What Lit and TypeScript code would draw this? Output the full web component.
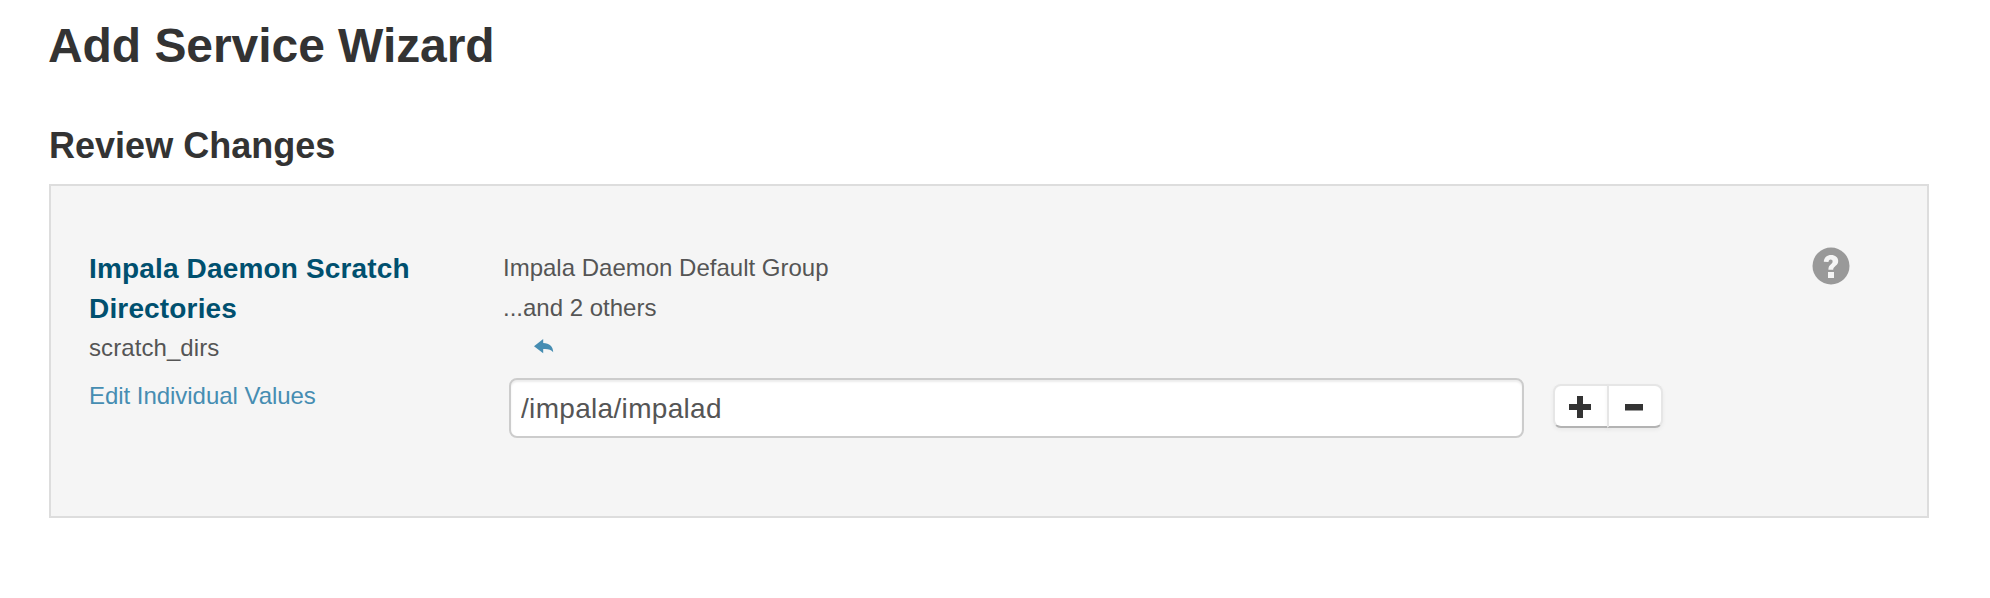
import { LitElement, html, css } from "lit";
import { customElement, property } from "lit/decorators.js";

@customElement("config-property")
class ConfigProperty extends LitElement {
  @property() label = "";
  @property() name = "";
  @property() group = "";
  @property() others = "";
  @property() value = "";

  static styles = css`
    :host {
      display: grid;
      grid-template-columns: 414px 1fr 38px;
      color: #555;
      font-size: 24px;
      line-height: 40px;
    }
    .title {
      margin: 0 0 -1px;
      padding-top: 1px;
      width: 340px;
      font-size: 28px;
      line-height: 40px;
      letter-spacing: 0.16px;
      color: #00506f;
    }
    .name {
      letter-spacing: 0.08px;
    }
    .edit {
      display: block;
      margin-top: 8px;
      color: #468db2;
      text-decoration: none;
      letter-spacing: -0.04px;
    }
    .undo {
      display: block;
      width: 20px;
      height: 16px;
      margin: 11px 0 23px 31px;
      fill: #468db2;
    }
    .row {
      display: flex;
      align-items: flex-start;
      padding-left: 6px;
    }
    .field {
      box-sizing: border-box;
      width: 1015px;
      height: 60px;
      margin: 0;
      padding: 2px 10px 0;
      border: 2px solid #ccc;
      border-radius: 8px;
      background: #fff;
      box-shadow: inset 0 2px 2px rgba(0, 0, 0, 0.075);
      font: 28px "Liberation Sans", Arial, sans-serif;
      letter-spacing: 0.32px;
      color: #555;
      outline: none;
    }
    .buttons {
      display: flex;
      margin: 6px 0 0 29px;
    }
    .button {
      box-sizing: border-box;
      display: flex;
      align-items: center;
      justify-content: center;
      width: 56px;
      height: 44px;
      padding: 1px 2px 0 0;
      border: 2px solid #e6e6e6;
      border-bottom-color: #b3b3b3;
      border-radius: 8px 0 0 8px;
      background: #fff;
      box-shadow: 0 2px 4px rgba(0, 0, 0, 0.05);
    }
    .button + .button {
      margin-left: -2px;
      border-radius: 0 8px 8px 0;
    }
    .glyph {
      display: block;
      width: 24px;
      height: 24px;
      fill: #333;
    }
    .help {
      display: block;
      width: 38px;
      height: 38px;
      margin-top: -1px;
    }
  `;

  render() {
    return html`
      <div>
        <h3 class="title">${this.label}</h3>
        <div class="name">${this.name}</div>
        <a class="edit" href="#">Edit Individual Values</a>
      </div>
      <div>
        <div>${this.group}</div>
        <div>${this.others}</div>
        <svg class="undo" viewBox="0 0 20 16">
          <path d="M0 7.2 9.2 0v3.9C15.500 4 19 7.200 19.200 13.200 17 10.200 14 9.800 9.200 10v4.300z" />
        </svg>
        <div class="row">
          <input class="field" .value=${this.value} />
          <div class="buttons">
            <button class="button" aria-label="Add">
              <svg class="glyph" viewBox="0 0 24 24"><path d="M9 1h6v8h8v6h-8v8H9v-8H1V9h8z" /></svg>
            </button>
            <button class="button" aria-label="Remove">
              <svg class="glyph" viewBox="0 0 24 24"><path d="M3 9h18v6.500H3z" /></svg>
            </button>
          </div>
        </div>
      </div>
      <svg class="help" viewBox="0 0 38 38">
        <circle cx="19" cy="19" r="18.5" fill="#999" />
        <path
          fill="#f5f5f5"
          d="M11.8 14.8C12 10.400 15 7.900 19.200 7.900c4 0 7 2.500 7 6 0 5-5 5-5 8.800h-4.800c0-5.200 4.200-5.400 4.200-8.200 0-1.200-.7-1.900-1.900-1.900-1.400 0-2.100.9-2.200 2.500zM16 25h6v6h-6z"
        />
      </svg>
    `;
  }
}

@customElement("app-root")
class AppRoot extends LitElement {
  static styles = css`
    :host {
      display: block;
      box-sizing: border-box;
      min-height: 598px;
      padding: 6px 61px 0 49px;
      background: #fff;
      color: #333;
      font-family: "Liberation Sans", Arial, sans-serif;
    }
    .page-title {
      margin: 0 0 0 -1px;
      font-size: 48px;
      line-height: 80px;
      letter-spacing: -0.06px;
    }
    .step-title {
      margin: 40px 0 0;
      font-size: 36px;
      line-height: 40px;
      letter-spacing: 0.02px;
    }
    .panel {
      box-sizing: border-box;
      height: 334px;
      margin-top: 18px;
      padding: 62px 77px 0 38px;
      border: 2px solid #ddd;
      background: #f5f5f5;
    }
  `;

  render() {
    return html`
      <h1 class="page-title">Add Service Wizard</h1>
      <h2 class="step-title">Review Changes</h2>
      <section class="panel">
        <config-property
          label="Impala Daemon Scratch Directories"
          name="scratch_dirs"
          group="Impala Daemon Default Group"
          others="...and 2 others"
          value="/impala/impalad"
        ></config-property>
      </section>
    `;
  }
}
